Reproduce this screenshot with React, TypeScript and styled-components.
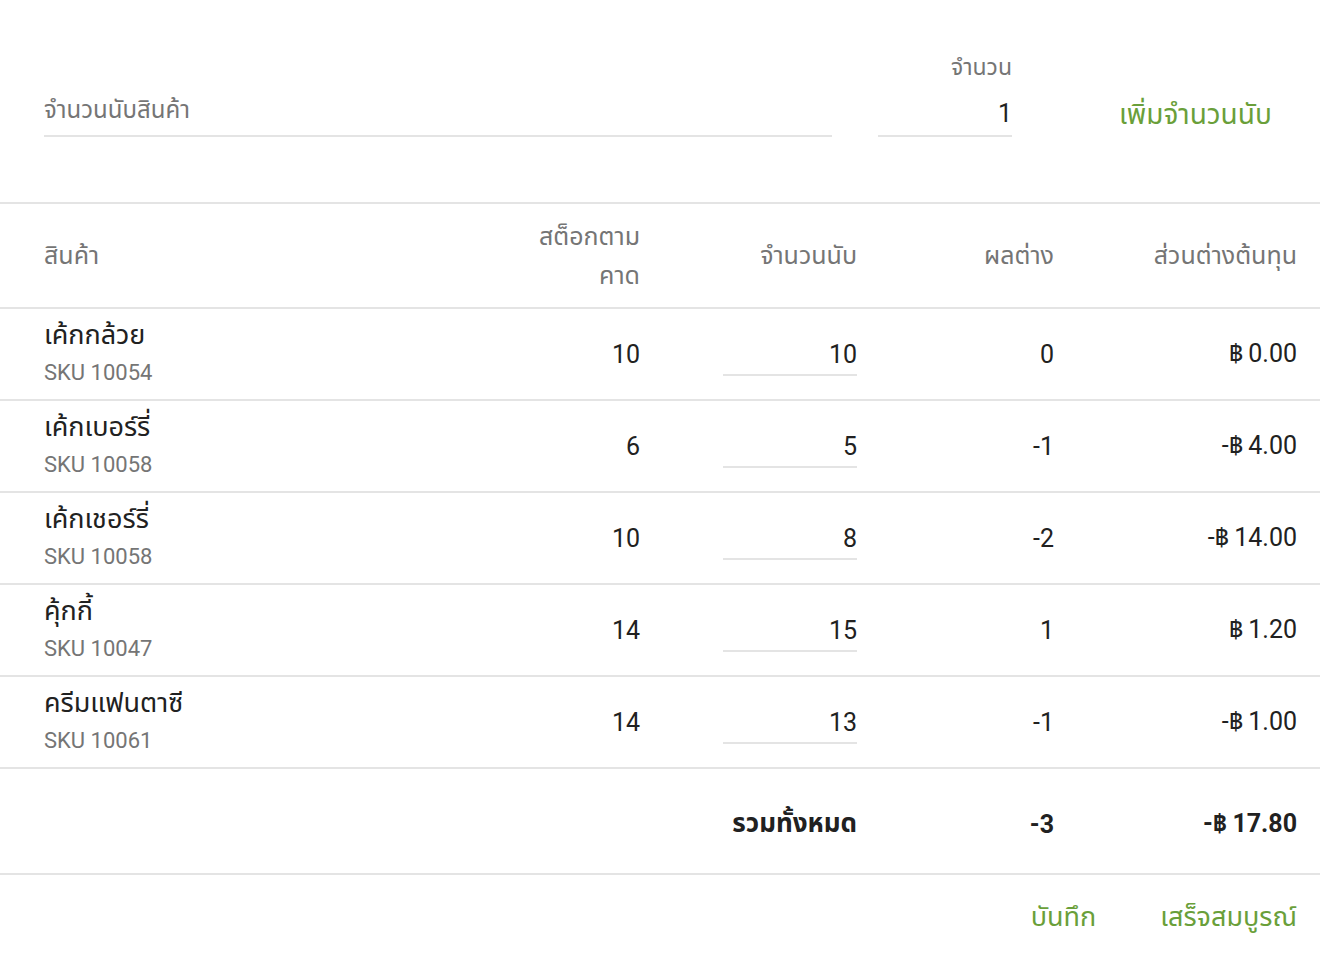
import styled, { createGlobalStyle } from "styled-components";

const GlobalStyle = createGlobalStyle`
  html, body {
    margin: 0;
    padding: 0;
    background: #ffffff;
  }
  body {
    font-family: Roboto, "Noto Sans Thai", "Noto Sans", "DejaVu Sans", sans-serif;
    color: #212121;
  }
`;

const GREEN = "#6a9f3a";
const LINE = "#e4e4e4";
const GREY = "#757575";

const Page = styled.div`
  width: 1320px;
  height: 964px;
  display: flex;
  flex-direction: column;
  overflow: hidden;
`;

const TopBar = styled.div`
  height: 204px;
  box-sizing: border-box;
  padding: 52px 0 0 44px;
  display: flex;
  align-items: flex-start;
  border-bottom: 2px solid ${LINE};
`;

const SearchField = styled.div`
  width: 788px;
  height: 85px;
  box-sizing: border-box;
  display: flex;
  align-items: flex-end;
  padding-bottom: 10px;
  border-bottom: 2px solid ${LINE};
  font-size: 24px;
  line-height: 30px;
  color: ${GREY};
`;

const QtyField = styled.div`
  width: 134px;
  height: 85px;
  margin-left: 46px;
  box-sizing: border-box;
  display: flex;
  flex-direction: column;
  align-items: flex-end;
  border-bottom: 2px solid ${LINE};
`;

const QtyLabel = styled.span`
  font-size: 23px;
  line-height: 32px;
  color: ${GREY};
`;

const QtyValue = styled.span`
  font-size: 25px;
  line-height: 30px;
  margin-top: 15px;
  color: #212121;
`;

const TextButton = styled.button<{ $size?: number }>`
  border: none;
  background: none;
  padding: 0;
  font-family: inherit;
  font-size: ${(p) => p.$size ?? 27}px;
  line-height: 40px;
  color: ${GREEN};
  cursor: pointer;
`;

const AddButton = styled(TextButton)`
  margin-left: 107px;
  margin-top: 43px;
`;

const Row = styled.div<{ $height: number; $top?: number }>`
  display: grid;
  grid-template-columns: 476px 120px 217px 197px 243px;
  align-items: center;
  height: ${(p) => p.$height}px;
  box-sizing: border-box;
  padding: ${(p) => p.$top ?? 0}px 23px 0 44px;
  border-bottom: 2px solid ${LINE};
`;

const HeadCell = styled.div<{ $left?: boolean }>`
  font-size: 25px;
  line-height: 39px;
  color: ${GREY};
  text-align: ${(p) => (p.$left ? "left" : "right")};
`;

const ProductCell = styled.div`
  display: flex;
  flex-direction: column;
`;

const ProductName = styled.span`
  font-size: 27px;
  line-height: 38px;
  color: #212121;
`;

const Sku = styled.span`
  font-size: 22px;
  line-height: 38px;
  color: ${GREY};
`;

const NumCell = styled.div<{ $bold?: boolean; $size?: number }>`
  font-size: ${(p) => p.$size ?? 25}px;
  text-align: right;
  color: #212121;
  font-weight: ${(p) => (p.$bold ? 700 : 400)};
`;

const Baht = styled.span`
  margin-right: 5px;
`;

const CountCell = styled.div`
  display: flex;
  justify-content: flex-end;
`;

const CountInput = styled.div`
  width: 134px;
  height: 44px;
  box-sizing: border-box;
  border-bottom: 2px solid ${LINE};
  font-size: 25px;
  line-height: 46px;
  text-align: right;
`;

const Footer = styled.div`
  flex: 1;
  display: flex;
  justify-content: flex-end;
  align-items: flex-start;
  gap: 64px;
  padding: 22px 23px 0 0;
`;

const items = [
  { name: "เค้กกล้วย", sku: "10054", stock: 10, count: 10, diff: "0", sign: "", cost: "0.00" },
  { name: "เค้กเบอร์รี่", sku: "10058", stock: 6, count: 5, diff: "-1", sign: "-", cost: "4.00" },
  { name: "เค้กเชอร์รี่", sku: "10058", stock: 10, count: 8, diff: "-2", sign: "-", cost: "14.00" },
  { name: "คุ้กกี้", sku: "10047", stock: 14, count: 15, diff: "1", sign: "", cost: "1.20" },
  { name: "ครีมแฟนตาซี", sku: "10061", stock: 14, count: 13, diff: "-1", sign: "-", cost: "1.00" },
];

const App = () => {
  return (
    <Page>
      <GlobalStyle />
      <TopBar>
        <SearchField>จำนวนนับสินค้า</SearchField>
        <QtyField>
          <QtyLabel>จำนวน</QtyLabel>
          <QtyValue>1</QtyValue>
        </QtyField>
        <AddButton type="button" $size={28}>
          เพิ่มจำนวนนับ
        </AddButton>
      </TopBar>
      <Row $height={105}>
        <HeadCell $left>สินค้า</HeadCell>
        <HeadCell>สต็อกตาม คาด</HeadCell>
        <HeadCell>จำนวนนับ</HeadCell>
        <HeadCell>ผลต่าง</HeadCell>
        <HeadCell>ส่วนต่างต้นทุน</HeadCell>
      </Row>
      {items.map((item, i) => (
        <Row $height={92} key={`${item.sku}_${i}`}>
          <ProductCell>
            <ProductName>{item.name}</ProductName>
            <Sku>SKU {item.sku}</Sku>
          </ProductCell>
          <NumCell>{item.stock}</NumCell>
          <CountCell>
            <CountInput>{item.count}</CountInput>
          </CountCell>
          <NumCell>{item.diff}</NumCell>
          <NumCell>
            {item.sign}
            <Baht>฿</Baht>
            {item.cost}
          </NumCell>
        </Row>
      ))}
      <Row $height={106} $top={6}>
        <div />
        <div />
        <NumCell $bold $size={26}>
          รวมทั้งหมด
        </NumCell>
        <NumCell $bold>-3</NumCell>
        <NumCell $bold>
          -<Baht>฿</Baht>17.80
        </NumCell>
      </Row>
      <Footer>
        <TextButton type="button">บันทึก</TextButton>
        <TextButton type="button">เสร็จสมบูรณ์</TextButton>
      </Footer>
    </Page>
  );
};

export default App;
